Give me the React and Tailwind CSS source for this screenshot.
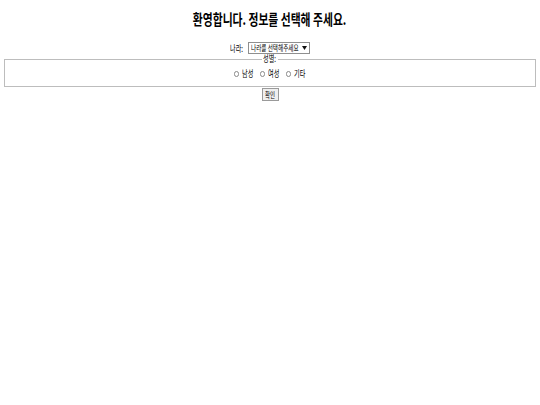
const font = { fontFamily: '"Noto Sans CJK KR", "Noto Sans", sans-serif' };

// narrow text: keeps a fixed layout width, glyphs squeezed horizontally
const Narrow = ({ w, children, scale = 'scale-x-[0.68]' }) => (
  <span className={`inline-block whitespace-nowrap ${w}`}>
    <span className={`inline-block origin-left ${scale}`}>{children}</span>
  </span>
);

const Radio = ({ label }) => (
  <label className="flex items-center gap-[3px]">
    <input type="radio" name="gender" className="m-0 h-[6px] w-[5px] appearance-none rounded-full border border-[#8a8a8a] bg-white" />
    <Narrow w="w-[13px]">{label}</Narrow>
  </label>
);

export default function App() {
  return (
    <div className="min-h-[405px] bg-white text-center text-black" style={font}>
      <h1 className="mt-[9px] text-[15px] font-bold leading-[20px]">
        <span className="inline-block scale-x-[0.72] whitespace-nowrap">환영합니다. 정보를 선택해 주세요.</span>
      </h1>
      <form className="mt-[13px] text-[9px]">
        <div className="flex h-[12px] items-center justify-center gap-[5px] leading-[11px]">
          <Narrow w="w-[13px]">나라:</Narrow>
          <div role="combobox" className="flex h-[12px] w-[62px] items-center justify-between border border-[#8f8f8f] bg-white px-[2px] text-[8px] leading-[10px]">
            <Narrow w="w-[51px]" scale="scale-x-[0.7]">나라를 선택해주세요</Narrow>
            <svg width="5" height="4" viewBox="0 0 5 4"><path d="M0 0h5L2.5 4z" fill="#111" /></svg>
          </div>
        </div>
        <fieldset className="mx-[4px] border border-[#bdbdbd] px-2 pb-[7px]">
          <legend className="mx-auto px-[1px] leading-[10px]">
            <Narrow w="w-[14px]">성별:</Narrow>
          </legend>
          <div className="mt-[5px] flex h-[10px] items-center justify-center gap-[5px] leading-[10px]">
            <Radio label="남성" />
            <Radio label="여성" />
            <Radio label="기타" />
          </div>
        </fieldset>
        <button type="button" className="mt-[1px] h-[13px] w-[17px] border border-[#9a9a9a] bg-[#efefef] p-0 text-[8px] leading-[11px]">
          <Narrow w="w-[11px]">확인</Narrow>
        </button>
      </form>
    </div>
  );
}
